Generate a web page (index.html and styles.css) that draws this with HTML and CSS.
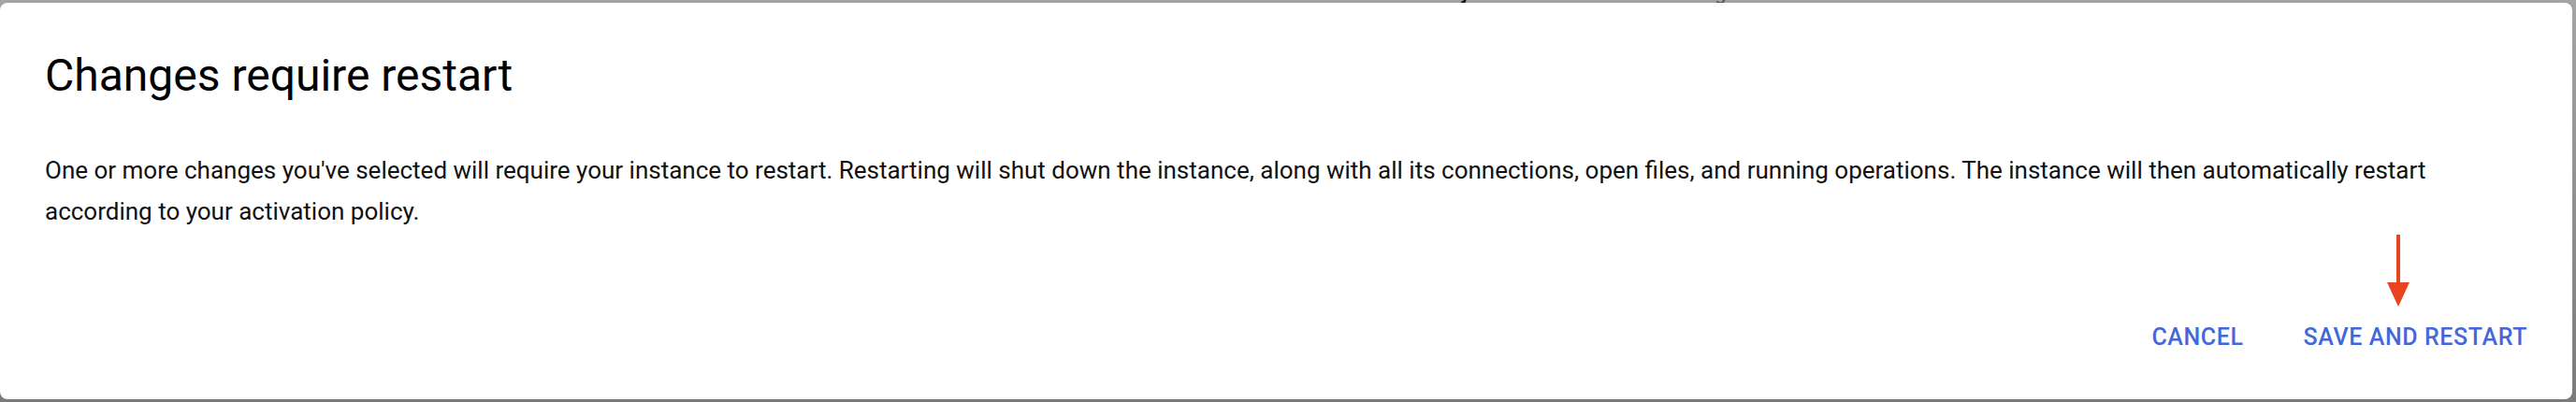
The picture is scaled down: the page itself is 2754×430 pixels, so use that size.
FILE: index.html
```html
<!DOCTYPE html>
<html lang="en">
<head>
<meta charset="utf-8">
<title>Changes require restart</title>
<link rel="stylesheet" href="styles.css">
</head>
<body>
  <div class="behind" aria-hidden="true">
    <span class="behind-label strong">Availability</span>
    <span class="behind-label">Single zone</span>
  </div>
  <div class="dialog" role="dialog" aria-labelledby="dlg-title">
    <h2 class="dialog-title" id="dlg-title">Changes require restart</h2>
    <p class="dialog-body">One or more changes you've selected will require your instance to restart. Restarting will shut down the instance, along with all its connections, open files, and running operations. The instance will then automatically restart according to your activation policy.</p>
    <div class="dialog-actions">
      <button class="btn" type="button">CANCEL</button>
      <button class="btn btn-primary" type="button">SAVE AND RESTART
        <svg class="pointer" width="26" height="78" viewBox="0 0 26 78" aria-hidden="true">
          <rect x="11" y="0" width="4" height="56" fill="#e8441f"/>
          <polygon points="1,51 25,51 13,77" fill="#e8441f"/>
        </svg>
      </button>
    </div>
  </div>
</body>
</html>
```

FILE: styles.css
```css
html, body {
  margin: 0;
  padding: 0;
}

body {
  width: 2754px;
  height: 430px;
  overflow: hidden;
  background: linear-gradient(to bottom, #a4a4a4 0%, #8c8c8c 60%, #7b7b7b 100%);
  font-family: Roboto, "Noto Sans", "Liberation Sans", sans-serif;
}

.behind {
  height: 3px;
  overflow: hidden;
  display: flex;
  padding-left: 1463px;
  gap: 231px;
}

.behind-label {
  font-size: 22px;
  line-height: 22px;
  margin-top: -19px;
  color: #555;
}

.behind-label.strong {
  color: #111;
  font-weight: 700;
}

.dialog {
  box-sizing: border-box;
  width: 2750px;
  height: 424px;
  background: #ffffff;
  border-radius: 8px;
  padding: 50px 36px 48px 48px;
  display: flex;
  flex-direction: column;
}

.dialog-title {
  margin: 0;
  font-size: 48px;
  line-height: 56px;
  font-weight: 400;
  color: #000000;
}

.dialog-body {
  margin: 51px 0 0 0;
  font-size: 26px;
  line-height: 44px;
  color: #111111;
}

.dialog-actions {
  margin-top: auto;
  display: flex;
  justify-content: flex-end;
  gap: 40px;
}

.btn {
  position: relative;
  background: none;
  border: 0;
  margin: 0;
  padding: 0 12px;
  font-family: Roboto, "Noto Sans", "Liberation Sans", sans-serif;
  font-size: 25px;
  font-weight: 500;
  line-height: 36px;
  letter-spacing: 0.6px;
  color: #4468d8;
  cursor: pointer;
}

.pointer {
  position: absolute;
  left: 100px;
  top: -92px;
}
```
